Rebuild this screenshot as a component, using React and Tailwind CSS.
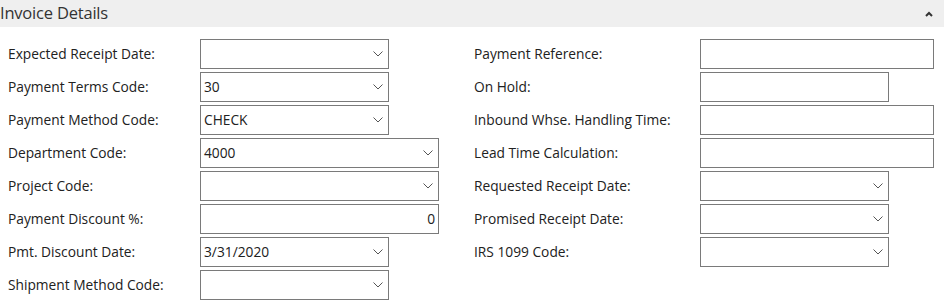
import React from "react";

const Chevron = () => (
  <svg width="10" height="6" viewBox="0 0 10 6" className="shrink-0">
    <path d="M0.5 0.5 L5 5 L9.5 0.5" fill="none" stroke="#555" strokeWidth="1" />
  </svg>
);

const Field = ({ value = "", width, select, right }) => (
  <div
    className={`h-[30px] ${width} border border-[#7a7a7a] bg-white flex items-center pl-[3px] pr-[3px] text-[#212121] ${
      right ? "justify-end" : "justify-between"
    }`}
  >
    <span>{value}</span>
    {select && (
      <span className="pr-[2px]">
        <Chevron />
      </span>
    )}
  </div>
);

const Row = ({ label, labelWidth, children }) => (
  <div className="flex items-center h-[30px]">
    <div className={`${labelWidth} shrink-0 text-[#212121]`}>{label}</div>
    {children}
  </div>
);

export default function App() {
  const left = [
    { label: "Expected Receipt Date:", width: "w-[189px]", select: true },
    { label: "Payment Terms Code:", value: "30", width: "w-[189px]", select: true },
    { label: "Payment Method Code:", value: "CHECK", width: "w-[189px]", select: true },
    { label: "Department Code:", value: "4000", width: "w-[239px]", select: true },
    { label: "Project Code:", width: "w-[239px]", select: true },
    { label: "Payment Discount %:", value: "0", width: "w-[239px]", right: true },
    { label: "Pmt. Discount Date:", value: "3/31/2020", width: "w-[189px]", select: true },
    { label: "Shipment Method Code:", width: "w-[189px]", select: true },
  ];

  const rightCol = [
    { label: "Payment Reference:", width: "w-[234px]" },
    { label: "On Hold:", width: "w-[189px]" },
    { label: "Inbound Whse. Handling Time:", width: "w-[234px]" },
    { label: "Lead Time Calculation:", width: "w-[234px]" },
    { label: "Requested Receipt Date:", width: "w-[189px]", select: true },
    { label: "Promised Receipt Date:", width: "w-[189px]", select: true },
    { label: "IRS 1099 Code:", width: "w-[189px]", select: true },
  ];

  return (
    <div className="w-[944px] h-[307px] bg-white font-['Open_Sans',sans-serif] text-[13.75px] overflow-hidden">
      {/* header */}
      <div className="h-[27px] bg-[#efefef] flex items-center justify-between pr-[11px]">
        <span className="text-[16.5px] text-[#333] tracking-[-0.2px]">Invoice Details</span>
        <svg width="8" height="6" viewBox="0 0 8 6">
          <path d="M1 5 L4 2 L7 5" fill="none" stroke="#333" strokeWidth="2" />
        </svg>
      </div>

      <div className="flex pt-[12px] pl-[8px]">
        <div className="w-[452px] flex flex-col gap-[3px]">
          {left.map((f, i) => (
            <Row key={i} label={f.label} labelWidth="w-[192px]">
              <Field value={f.value} width={f.width} select={f.select} right={f.right} />
            </Row>
          ))}
        </div>
        <div className="ml-[14px] flex flex-col gap-[3px]">
          {rightCol.map((f, i) => (
            <Row key={i} label={f.label} labelWidth="w-[226px]">
              <Field width={f.width} select={f.select} />
            </Row>
          ))}
        </div>
      </div>
    </div>
  );
}
